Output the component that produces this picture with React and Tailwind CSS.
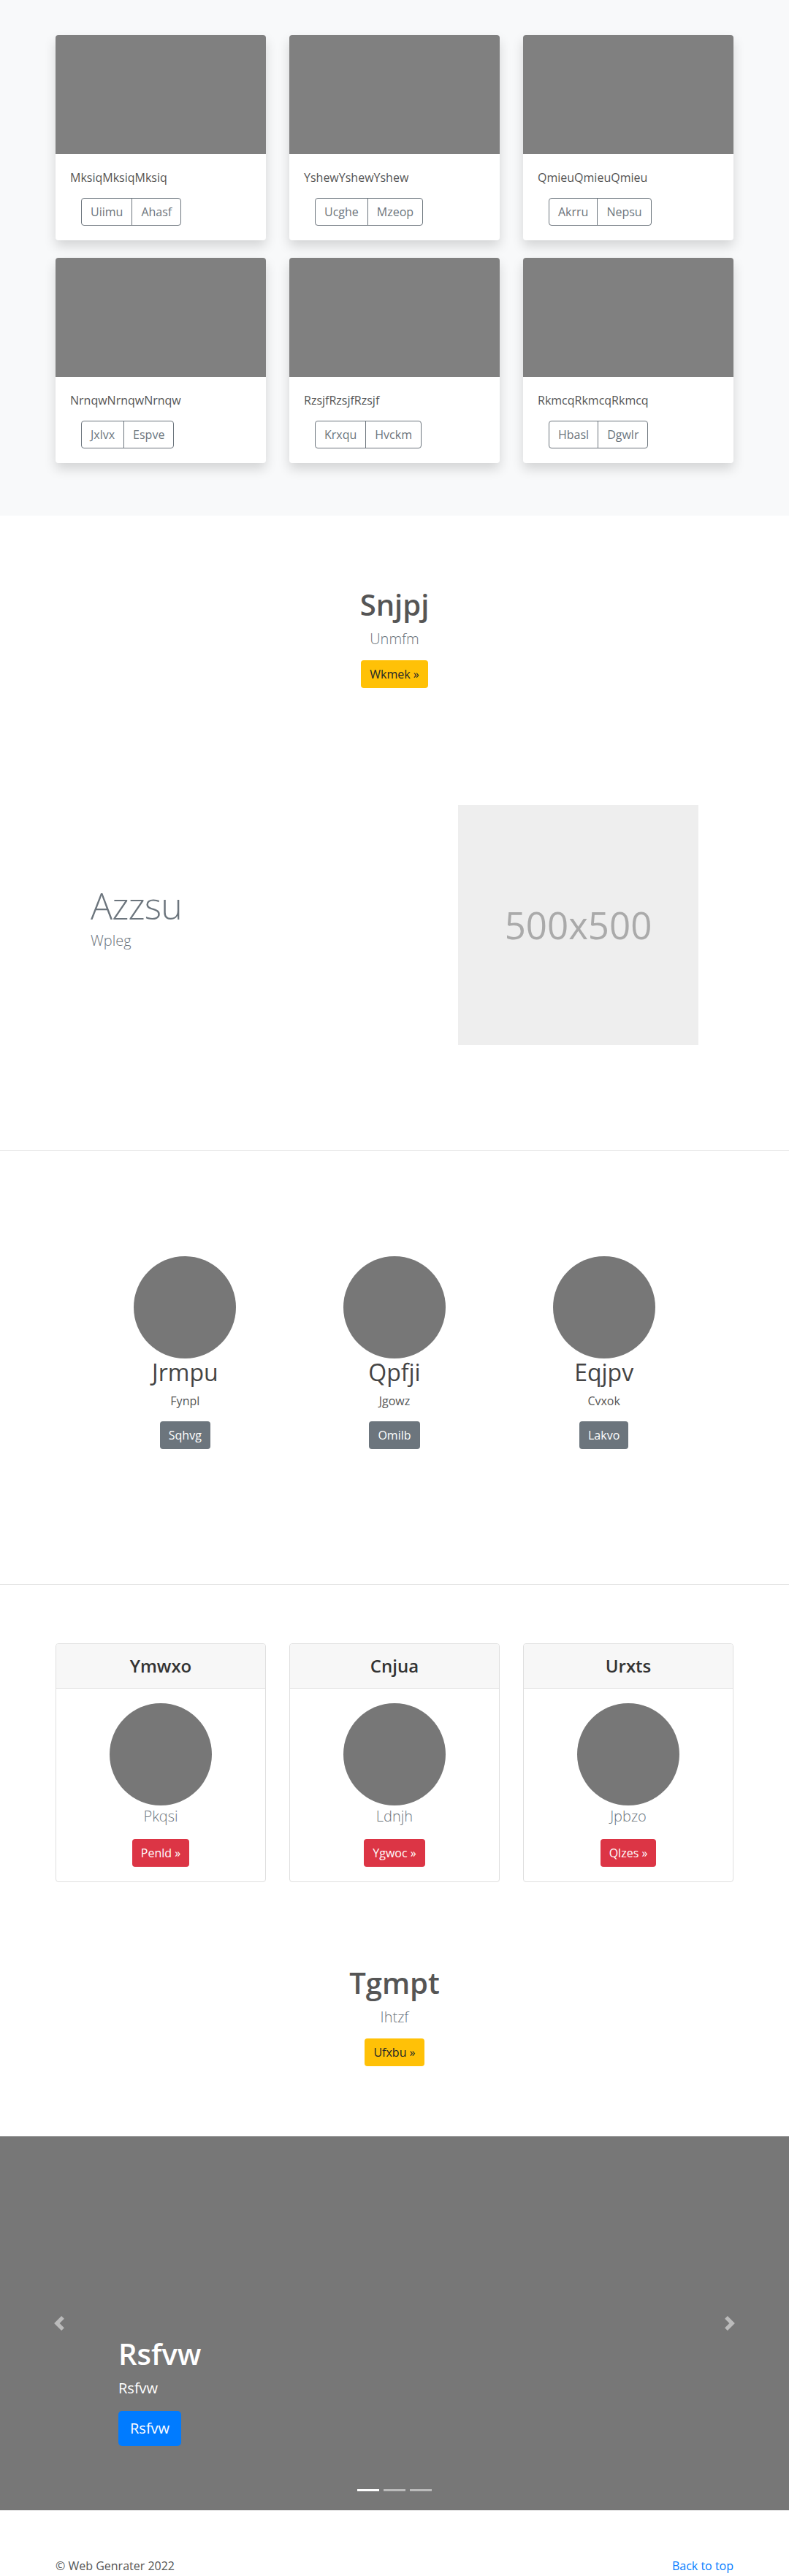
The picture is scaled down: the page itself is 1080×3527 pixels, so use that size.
import React from "react";

const albums = [
  { t: "MksiqMksiqMksiq", a: "Uiimu", b: "Ahasf" },
  { t: "YshewYshewYshew", a: "Ucghe", b: "Mzeop" },
  { t: "QmieuQmieuQmieu", a: "Akrru", b: "Nepsu" },
  { t: "NrnqwNrnqwNrnqw", a: "Jxlvx", b: "Espve" },
  { t: "RzsjfRzsjfRzsjf", a: "Krxqu", b: "Hvckm" },
  { t: "RkmcqRkmcqRkmcq", a: "Hbasl", b: "Dgwlr" },
];

const people = [
  { n: "Jrmpu", s: "Fynpl", b: "Sqhvg" },
  { n: "Qpfji", s: "Jgowz", b: "Omilb" },
  { n: "Eqjpv", s: "Cvxok", b: "Lakvo" },
];

const plans = [
  { h: "Ymwxo", s: "Pkqsi", b: "Penld »" },
  { h: "Cnjua", s: "Ldnjh", b: "Ygwoc »" },
  { h: "Urxts", s: "Jpbzo", b: "Qlzes »" },
];

function AlbumCard({ t, a, b }) {
  return (
    <div className="bg-white rounded-[4px] overflow-hidden shadow-[0_8px_16px_rgba(0,0,0,0.15)] mb-6">
      <div className="h-[163px] bg-[#808080]" />
      <div className="p-5">
        <p className="text-[16px] leading-6 text-[#555] mb-4">{t}</p>
        <div className="ml-[15px] inline-flex border border-[#6c757d] rounded-[4px] text-[#6c757d] text-[16px] leading-6">
          <span className="px-3 py-[6px]">{a}</span>
          <span className="px-3 py-[6px] border-l border-[#6c757d]">{b}</span>
        </div>
      </div>
    </div>
  );
}

function Hero({ title, sub, btn }) {
  return (
    <div className="text-center">
      <h1 className="text-[40px] leading-[48px] font-semibold text-[#555] mb-2">{title}</h1>
      <p className="text-[20px] leading-[30px] font-light text-[#6c757d] mb-[14px]">{sub}</p>
      <span className="inline-block bg-[#ffc107] text-[#212529] text-[16px] leading-6 px-3 py-[7px] rounded-[4px]">
        {btn}
      </span>
    </div>
  );
}

export default function App() {
  return (
    <div className="font-['Segoe_UI','Open_Sans',sans-serif] bg-white text-[#212529]">
      {/* Album */}
      <section className="bg-[#f8f9fa] pt-12 pb-[48px]">
        <div className="mx-auto w-[928px] grid grid-cols-3 gap-x-8">
          {albums.map((x) => (
            <AlbumCard key={x.t} {...x} />
          ))}
        </div>
      </section>

      {/* Hero 1 */}
      <section className="pt-[98px] pb-[96px]">
        <Hero title="Snjpj" sub="Unmfm" btn="Wkmek »" />
      </section>

      {/* Featurette */}
      <section className="pt-[64px] pb-[144px]">
        <div className="ml-[124px] flex items-center">
          <div className="w-[503px]">
            <h2 className="text-[50px] leading-[50px] font-light tracking-[-0.8px] text-[#6c757d] mb-2">Azzsu</h2>
            <p className="text-[20px] leading-[30px] font-light text-[#6c757d] mb-4">Wpleg</p>
          </div>
          <div className="w-[329px] h-[329px] bg-[#eeeeee] flex items-center justify-center">
            <span className="text-[51px] text-[#aaaaaa]">500x500</span>
          </div>
        </div>
      </section>
      <hr className="border-0 border-t border-[#e5e5e5]" />

      {/* Circles */}
      <section className="pt-[144px] pb-[185px]">
        <div className="mx-auto w-[860px] grid grid-cols-3 text-center">
          {people.map((p) => (
            <div key={p.n}>
              <div className="w-[140px] h-[140px] rounded-full bg-[#777777] mx-auto" />
              <h2 className="text-[32px] leading-[38px] font-normal text-[#444]">{p.n}</h2>
              <p className="text-[16px] leading-6 text-[#555] mt-2 mb-4">{p.s}</p>
              <span className="inline-block bg-[#6c757d] text-white text-[16px] leading-6 px-3 py-[7px] rounded-[4px]">
                {p.b}
              </span>
            </div>
          ))}
        </div>
      </section>
      <hr className="border-0 border-t border-[#e5e5e5]" />

      {/* Cards with header */}
      <section className="pt-[80px]">
        <div className="mx-auto w-[928px] grid grid-cols-3 gap-x-8">
          {plans.map((p) => (
            <div key={p.h} className="border border-[#dfdfdf] rounded-[4px] overflow-hidden text-center">
              <div className="bg-[#f7f7f7] border-b border-[#dfdfdf] py-3">
                <h4 className="text-[24px] leading-[36px] font-semibold text-[#333]">{p.h}</h4>
              </div>
              <div className="p-5">
                <div className="w-[140px] h-[140px] rounded-full bg-[#777777] mx-auto" />
                <p className="text-[20px] leading-[30px] font-light text-[#6c757d] mb-4">{p.s}</p>
                <span className="inline-block bg-[#dc3545] text-white text-[16px] leading-6 px-3 py-[7px] rounded-[4px]">
                  {p.b}
                </span>
              </div>
            </div>
          ))}
        </div>
      </section>

      {/* Hero 2 */}
      <section className="pt-[114px] pb-[96px]">
        <Hero title="Tgmpt" sub="Ihtzf" btn="Ufxbu »" />
      </section>

      {/* Carousel */}
      <section className="relative h-[512px] bg-[#777777] overflow-hidden">
        <div className="absolute left-0 top-0 bottom-0 w-[15%] flex items-center justify-center">
          <svg width="20" height="20" viewBox="0 0 8 8" className="opacity-50">
            <path fill="#fff" d="M5.25 0l-4 4 4 4 1.5-1.5L4.25 4l2.5-2.5L5.25 0z" />
          </svg>
        </div>
        <div className="absolute right-0 top-0 bottom-0 w-[15%] flex items-center justify-center">
          <svg width="20" height="20" viewBox="0 0 8 8" className="opacity-50">
            <path fill="#fff" d="M2.75 0l-1.5 1.5L3.75 4l-2.5 2.5L2.75 8l4-4-4-4z" />
          </svg>
        </div>
        <div className="absolute left-[15%] right-[15%] bottom-[88px] text-left text-white">
          <h1 className="text-[40px] leading-[48px] font-semibold mb-2">Rsfvw</h1>
          <p className="text-[20px] leading-[30px] mb-4">Rsfvw</p>
          <span className="inline-block bg-[#007bff] text-white text-[20px] leading-[30px] px-4 py-[9px] rounded-[5px]">
            Rsfvw
          </span>
        </div>
        <div className="absolute left-0 right-0 bottom-[26px] flex justify-center gap-[6px]">
          <span className="w-[30px] h-[3px] bg-white" />
          <span className="w-[30px] h-[3px] bg-white opacity-50" />
          <span className="w-[30px] h-[3px] bg-white opacity-50" />
        </div>
      </section>

      {/* Footer */}
      <footer className="mx-auto w-[928px] pt-[64px] flex justify-between text-[16px] leading-6">
        <p className="text-[#555]">© Web Genrater 2022</p>
        <a className="text-[#007bff]">Back to top</a>
      </footer>
    </div>
  );
}
